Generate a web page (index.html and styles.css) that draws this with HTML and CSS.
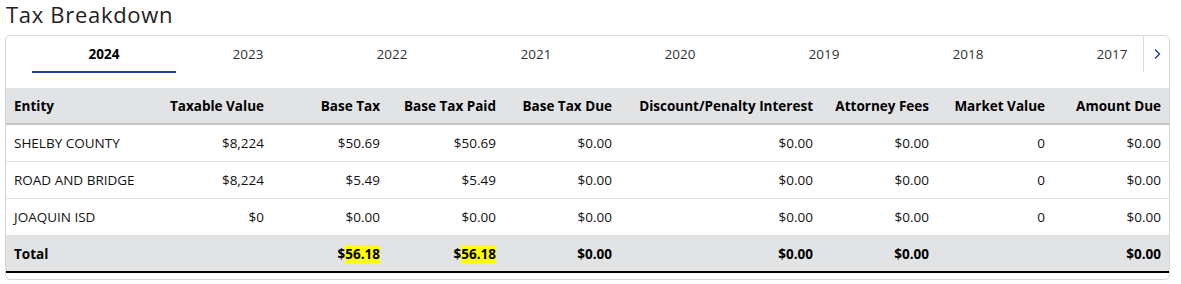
FILE: index.html
```html
<!DOCTYPE html>
<html>
<head>
<meta charset="utf-8">
<link rel="stylesheet" href="styles.css">
</head>
<body>
<h2 class="title">Tax Breakdown</h2>
<div class="card">
  <div class="tabbar">
    <div class="tabs">
      <div class="tab active">2024</div>
      <div class="tab">2023</div>
      <div class="tab">2022</div>
      <div class="tab">2021</div>
      <div class="tab">2020</div>
      <div class="tab">2019</div>
      <div class="tab">2018</div>
      <div class="tab">2017</div>
    </div>
    <div class="scroll-btn">
      <svg width="8" height="12" viewBox="0 0 8 12"><path d="M2 1.5 L6.5 6 L2 10.5" fill="none" stroke="#1b3a8c" stroke-width="1.3"/></svg>
    </div>
  </div>
  <table class="grid">
    <colgroup>
      <col class="c-entity"><col class="c-std"><col class="c-std"><col class="c-std"><col class="c-std"><col class="c-wide"><col class="c-std"><col class="c-std"><col class="c-std">
    </colgroup>
    <thead>
      <tr>
        <th class="left">Entity</th>
        <th>Taxable Value</th>
        <th>Base Tax</th>
        <th>Base Tax Paid</th>
        <th>Base Tax Due</th>
        <th>Discount/Penalty Interest</th>
        <th>Attorney Fees</th>
        <th>Market Value</th>
        <th>Amount Due</th>
      </tr>
    </thead>
    <tbody>
      <tr>
        <td class="left">SHELBY COUNTY</td><td>$8,224</td><td>$50.69</td><td>$50.69</td><td>$0.00</td><td>$0.00</td><td>$0.00</td><td>0</td><td>$0.00</td>
      </tr>
      <tr>
        <td class="left">ROAD AND BRIDGE</td><td>$8,224</td><td>$5.49</td><td>$5.49</td><td>$0.00</td><td>$0.00</td><td>$0.00</td><td>0</td><td>$0.00</td>
      </tr>
      <tr>
        <td class="left">JOAQUIN ISD</td><td>$0</td><td>$0.00</td><td>$0.00</td><td>$0.00</td><td>$0.00</td><td>$0.00</td><td>0</td><td>$0.00</td>
      </tr>
    </tbody>
    <tfoot>
      <tr>
        <td class="left">Total</td><td></td><td>$<span class="hl">56.18</span></td><td>$<span class="hl">56.18</span></td><td>$0.00</td><td>$0.00</td><td>$0.00</td><td></td><td>$0.00</td>
      </tr>
    </tfoot>
  </table>
</div>
</body>
</html>
```
FILE: styles.css
```css
html, body {
  margin: 0;
  padding: 0;
  background: #fff;
}
body {
  padding: 0 11px 0 5px;
  font-family: "Open Sans", "Noto Sans", sans-serif;
  color: #212529;
}
.title {
  margin: 0;
  padding-left: 1px;
  height: 35px;
  line-height: 29px;
  font-family: "Open Sans", sans-serif;
  font-weight: 400;
  font-size: 22px;
  letter-spacing: 0.7px;
  color: #222;
}
.card {
  border: 1px solid #d6d6d6;
  border-radius: 5px;
  padding-bottom: 6px;
}
.tabbar {
  display: flex;
  height: 52px;
  padding-left: 26px;
}
.tabs {
  flex: 1;
  display: flex;
  overflow: hidden;
  height: 37px;
}
.tab {
  flex: 0 0 144px;
  height: 37px;
  box-sizing: border-box;
  text-align: center;
  padding-top: 9px;
  font-size: 13.5px;
  color: #333;
}
.tab.active {
  font-weight: 700;
  color: #000;
  border-bottom: 2px solid #1f3f99;
}
.scroll-btn {
  width: 25px;
  height: 37px;
  margin-top: -1px;
  border-left: 1px solid #dcdcdc;
  display: flex;
  align-items: center;
  justify-content: center;
}
.grid {
  width: 100%;
  border-collapse: collapse;
  table-layout: fixed;
  font-size: 13.5px;
}
.c-entity { width: 150px; }
.c-std { width: 116px; }
.c-wide { width: 201px; }
.grid th, .grid td {
  padding: 0 8px;
  text-align: right;
  white-space: nowrap;
}
.grid .left { text-align: left; }
.grid thead th {
  height: 35px;
  background: #e2e3e5;
  font-weight: 700;
  color: #000;
  border-bottom: 2px solid #c4c4c4;
}
.grid tbody td {
  height: 36px;
  border-bottom: 1px solid #dee2e6;
  color: #111;
}
.grid tfoot td {
  height: 35px;
  background: #e2e3e5;
  font-weight: 700;
  color: #000;
  border-bottom: 2px solid #000;
}
.hl { background: #ffff00; }
```
